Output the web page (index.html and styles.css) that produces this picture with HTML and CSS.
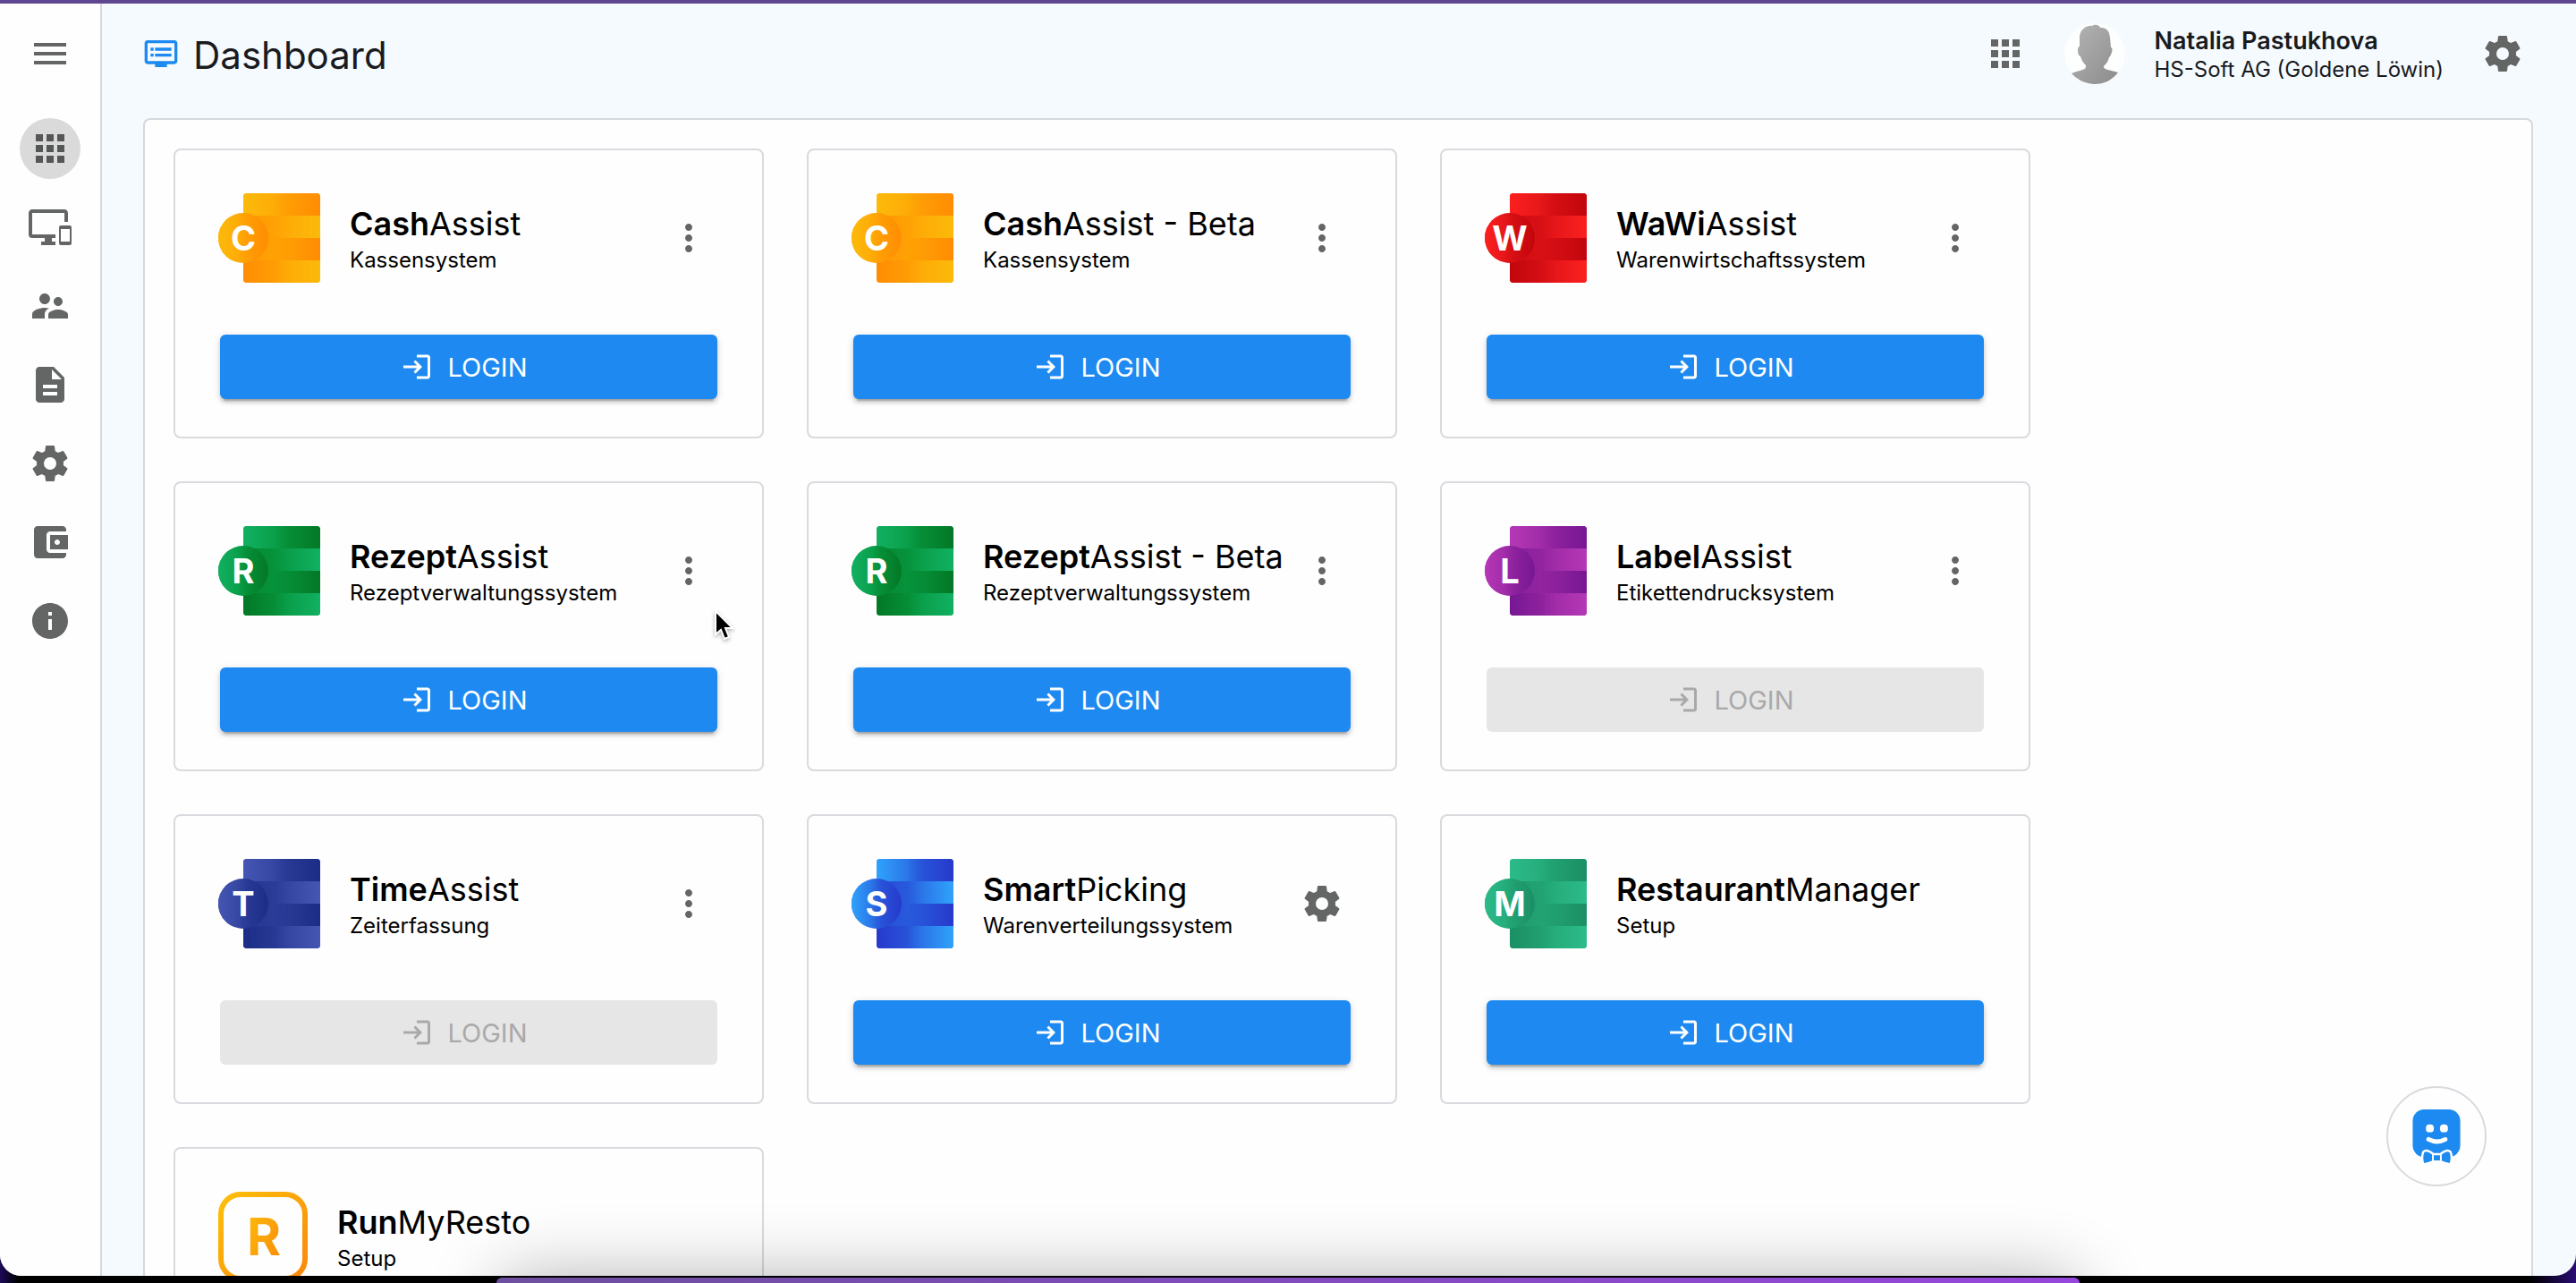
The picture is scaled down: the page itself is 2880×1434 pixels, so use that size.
FILE: index.html
```html
<!DOCTYPE html>
<html lang="de">
<head>
<meta charset="utf-8">
<title>Dashboard</title>
<link rel="stylesheet" href="styles.css">
</head>
<body>
<svg class="defs" aria-hidden="true">
  <defs>
    <linearGradient id="ramp-right"><stop offset="0" stop-color="#000"/><stop offset="1" stop-color="#fff"/></linearGradient>
    <linearGradient id="ramp-left"><stop offset="0" stop-color="#fff"/><stop offset="1" stop-color="#000"/></linearGradient>
    <linearGradient id="amber" x1="0" y1="0" x2="1" y2="1"><stop offset="0" stop-color="#fdbf0b"/><stop offset="1" stop-color="#f9880a"/></linearGradient>
    <linearGradient id="silver" x1="0" y1="0" x2="1" y2="1"><stop offset="0" stop-color="#b4b4b4"/><stop offset="1" stop-color="#8c8c8c"/></linearGradient>
    <mask id="fade-right" maskContentUnits="objectBoundingBox"><rect x=".4" width=".6" height="1" fill="url(#ramp-right)"/></mask>
    <mask id="fade-left" maskContentUnits="objectBoundingBox"><rect width=".6" height="1" fill="url(#ramp-left)"/></mask>
    <clipPath id="sheet"><rect x="28" width="86" height="100" rx="4"/></clipPath>
    <symbol id="logo" viewBox="0 0 114 100">
      <g clip-path="url(#sheet)">
        <rect class="mid" x="28" width="86" height="100"/>
        <rect class="light" x="28" width="86" height="25" mask="url(#fade-left)"/>
        <rect class="dark" x="28" width="86" height="25" mask="url(#fade-right)"/>
        <rect class="dark" x="28" y="25" width="86" height="50" opacity=".5" mask="url(#fade-left)"/>
        <rect class="light" x="28" y="25" width="86" height="25" mask="url(#fade-right)"/>
        <rect class="dark" x="28" y="50" width="86" height="25" mask="url(#fade-right)"/>
        <rect class="dark" x="28" y="75" width="86" height="25" mask="url(#fade-left)"/>
        <rect class="light" x="28" y="75" width="86" height="25" mask="url(#fade-right)"/>
      </g>
      <circle class="mid" cx="28" cy="50" r="28"/>
      <circle class="light" cx="28" cy="50" r="28" mask="url(#fade-left)"/>
      <circle class="dark" cx="28" cy="50" r="28" mask="url(#fade-right)"/>
    </symbol>
    <symbol id="i-menu" viewBox="0 0 24 24"><path d="M3 18h18v-2H3v2zm0-5h18v-2H3v2zm0-7v2h18V6H3z"/></symbol>
    <symbol id="i-apps" viewBox="0 0 24 24"><path d="M4 8h4V4H4v4zm6 12h4v-4h-4v4zm-6 0h4v-4H4v4zm0-6h4v-4H4v4zm6 0h4v-4h-4v4zm6-10v4h4V4h-4zm-6 4h4V4h-4v4zm6 6h4v-4h-4v4zm0 6h4v-4h-4v4z"/></symbol>
    <symbol id="i-devices" viewBox="0 0 24 24"><path d="M23 11H18A1 1 0 0 0 17 12V21A1 1 0 0 0 18 22H23A1 1 0 0 0 24 21V12A1 1 0 0 0 23 11M23 20H18V13H23V20M20 2H2C.89 2 0 2.89 0 4V16A2 2 0 0 0 2 18H9V20H7V22H15V20H13V18H15V16H2V4H20V9H22V4C22 2.89 21.1 2 20 2Z"/></symbol>
    <symbol id="i-users" viewBox="0 0 24 24"><path d="M16.5 12c1.38 0 2.49-1.12 2.49-2.5S17.88 7 16.5 7 14 8.12 14 9.5s1.12 2.5 2.5 2.5zM9 11c1.66 0 2.99-1.34 2.99-3S10.66 5 9 5 6 6.34 6 8s1.34 3 3 3zm7.5 3c-1.83 0-5.5.92-5.5 2.75V19h11v-2.25c0-1.83-3.67-2.75-5.5-2.75zM9 13c-2.33 0-7 1.17-7 3.5V19h7v-2.25c0-.85.33-2.34 2.37-3.47C10.5 13.1 9.66 13 9 13z"/></symbol>
    <symbol id="i-doc" viewBox="0 0 24 24"><path d="M14 2H6c-1.1 0-1.99.9-1.99 2L4 20c0 1.1.89 2 1.99 2H18c1.1 0 2-.9 2-2V8l-6-6zm2 16H8v-2h8v2zm0-4H8v-2h8v2zm-3-5V3.500L18.500 9H13z"/></symbol>
    <symbol id="i-cog" viewBox="0 0 24 24"><path d="M12,15.5A3.5,3.5 0 0,1 8.5,12A3.5,3.5 0 0,1 12,8.5A3.5,3.5 0 0,1 15.5,12A3.5,3.5 0 0,1 12,15.5M19.43,12.97C19.47,12.65 19.5,12.33 19.5,12C19.5,11.67 19.47,11.34 19.43,11L21.54,9.37C21.73,9.22 21.78,8.95 21.66,8.73L19.66,5.27C19.54,5.05 19.27,4.96 19.05,5.05L16.56,6.05C16.04,5.66 15.5,5.32 14.87,5.07L14.5,2.42C14.46,2.18 14.25,2 14,2H10C9.75,2 9.54,2.18 9.5,2.42L9.13,5.07C8.5,5.32 7.96,5.66 7.44,6.05L4.95,5.05C4.73,4.96 4.46,5.05 4.34,5.27L2.34,8.73C2.21,8.95 2.27,9.22 2.46,9.37L4.57,11C4.53,11.34 4.5,11.67 4.5,12C4.5,12.33 4.53,12.65 4.57,12.97L2.46,14.63C2.27,14.78 2.21,15.05 2.34,15.27L4.34,18.73C4.46,18.95 4.73,19.03 4.95,18.95L7.44,17.94C7.96,18.34 8.5,18.68 9.13,18.93L9.5,21.58C9.54,21.82 9.75,22 10,22H14C14.25,22 14.46,21.82 14.5,21.58L14.87,18.93C15.5,18.67 16.04,18.34 16.56,17.94L19.05,18.95C19.27,19.03 19.54,18.95 19.66,18.73L21.66,15.27C21.78,15.05 21.73,14.78 21.54,14.63L19.43,12.97Z"/></symbol>
    <symbol id="i-wallet" viewBox="0 0 24 24"><path d="M21 18v1c0 1.1-.9 2-2 2H5c-1.11 0-2-.9-2-2V5c0-1.1.89-2 2-2h14c1.1 0 2 .9 2 2v1h-9c-1.11 0-2 .9-2 2v8c0 1.1.89 2 2 2h9zm-9-2h10V8H12v8zm4-2.5c-.83 0-1.5-.67-1.5-1.5s.67-1.5 1.5-1.5 1.500.67 1.500 1.500-.67 1.500-1.500 1.500z"/></symbol>
    <symbol id="i-info" viewBox="0 0 24 24"><path d="M12 2C6.480 2 2 6.480 2 12s4.480 10 10 10 10-4.480 10-10S17.520 2 12 2zm1 15h-2v-6h2v6zm0-8h-2V7h2v2z"/></symbol>
    <symbol id="i-dvr" viewBox="0 0 24 24"><path d="M21 3H3c-1.1 0-2 .9-2 2v12c0 1.1.9 2 2 2h5v2h8v-2h5c1.1 0 1.99-.9 1.99-2L23 5c0-1.1-.9-2-2-2zm0 14H3V5h18v12zm-2-9H8v2h11V8zm0 4H8v2h11v-2zM7 8H5v2h2V8zm0 4H5v2h2v-2z"/></symbol>
    <symbol id="i-more" viewBox="0 0 24 24"><path d="M12 8c1.1 0 2-.9 2-2s-.9-2-2-2-2 .9-2 2 .9 2 2 2zm0 2c-1.1 0-2 .9-2 2s.9 2 2 2 2-.9 2-2-.9-2-2-2zm0 6c-1.1 0-2 .9-2 2s.9 2 2 2 2-.9 2-2-.9-2-2-2z"/></symbol>
    <symbol id="i-login" viewBox="0 0 24 24"><path d="M11 7 9.6 8.4l2.6 2.6H2v2h10.2l-2.6 2.6L11 17l5-5-5-5zm9 12h-8v2h8c1.1 0 2-.9 2-2V5c0-1.1-.9-2-2-2h-8v2h8v14z"/></symbol>
  </defs>
</svg>

<div class="window">
  <nav class="sidebar" aria-label="Navigation">
    <button class="round" aria-label="Menü"><svg class="icon"><use href="#i-menu"/></svg></button>
    <div class="links">
      <a class="round active" href="#apps" aria-label="Apps"><svg class="icon"><use href="#i-apps"/></svg></a>
      <a class="round" href="#devices" aria-label="Geräte"><svg class="icon"><use href="#i-devices"/></svg></a>
      <a class="round" href="#users" aria-label="Benutzer"><svg class="icon"><use href="#i-users"/></svg></a>
      <a class="round" href="#documents" aria-label="Dokumente"><svg class="icon"><use href="#i-doc"/></svg></a>
      <a class="round" href="#settings" aria-label="Einstellungen"><svg class="icon"><use href="#i-cog"/></svg></a>
      <a class="round" href="#wallet" aria-label="Zahlungen"><svg class="icon"><use href="#i-wallet"/></svg></a>
      <a class="round" href="#info" aria-label="Info"><svg class="icon"><use href="#i-info"/></svg></a>
    </div>
  </nav>

  <div class="page">
    <header class="topbar">
      <svg class="title-icon"><use href="#i-dvr"/></svg>
      <h1>Dashboard</h1>
      <button class="round apps" aria-label="Apps"><svg class="icon"><use href="#i-apps"/></svg></button>
      <svg class="avatar" viewBox="0 0 68 68" aria-hidden="true">
        <circle cx="34" cy="34" r="34" fill="#fdfefe"/>
        <path fill="url(#silver)" d="M17 14C19 5 26 2 31 3C35 0 40 3 40 5C45 5 50 6 51 16L52 27C54 27 54 31 52 35Q51 38 50 38C49 43 46 46 44 48C43 52 51 52 60 55C53 64 44 68 34 68C24 68 14 63 8 56C17 52 25 53 24 47C21 44 19 41 18 37Q15 36 15 30Q15 26 17 26Z"/>
      </svg>
      <div class="user"><strong>Natalia Pastukhova</strong><span>HS-Soft AG (Goldene Löwin)</span></div>
      <button class="round" aria-label="Einstellungen"><svg class="icon"><use href="#i-cog"/></svg></button>
    </header>

    <main class="panel">
      <article class="card cash">
        <div class="head"><svg class="logo" viewBox="0 0 114 100"><use href="#logo"/><text x="28" y="64">C</text></svg>
          <div class="text"><h2><b>Cash</b>Assist</h2><p>Kassensystem</p></div>
          <button class="more" aria-label="Mehr"><svg class="icon"><use href="#i-more"/></svg></button></div>
        <button class="login"><svg><use href="#i-login"/></svg>LOGIN</button>
      </article>
      <article class="card cash">
        <div class="head"><svg class="logo" viewBox="0 0 114 100"><use href="#logo"/><text x="28" y="64">C</text></svg>
          <div class="text"><h2><b>Cash</b>Assist - Beta</h2><p>Kassensystem</p></div>
          <button class="more" aria-label="Mehr"><svg class="icon"><use href="#i-more"/></svg></button></div>
        <button class="login"><svg><use href="#i-login"/></svg>LOGIN</button>
      </article>
      <article class="card wawi">
        <div class="head"><svg class="logo" viewBox="0 0 114 100"><use href="#logo"/><text x="28" y="64">W</text></svg>
          <div class="text"><h2><b>WaWi</b>Assist</h2><p>Warenwirtschaftssystem</p></div>
          <button class="more" aria-label="Mehr"><svg class="icon"><use href="#i-more"/></svg></button></div>
        <button class="login"><svg><use href="#i-login"/></svg>LOGIN</button>
      </article>
      <article class="card rezept">
        <div class="head"><svg class="logo" viewBox="0 0 114 100"><use href="#logo"/><text x="28" y="64">R</text></svg>
          <div class="text"><h2><b>Rezept</b>Assist</h2><p>Rezeptverwaltungssystem</p></div>
          <button class="more" aria-label="Mehr"><svg class="icon"><use href="#i-more"/></svg></button></div>
        <button class="login"><svg><use href="#i-login"/></svg>LOGIN</button>
      </article>
      <article class="card rezept">
        <div class="head"><svg class="logo" viewBox="0 0 114 100"><use href="#logo"/><text x="28" y="64">R</text></svg>
          <div class="text"><h2><b>Rezept</b>Assist - Beta</h2><p>Rezeptverwaltungssystem</p></div>
          <button class="more" aria-label="Mehr"><svg class="icon"><use href="#i-more"/></svg></button></div>
        <button class="login"><svg><use href="#i-login"/></svg>LOGIN</button>
      </article>
      <article class="card label">
        <div class="head"><svg class="logo" viewBox="0 0 114 100"><use href="#logo"/><text x="28" y="64">L</text></svg>
          <div class="text"><h2><b>Label</b>Assist</h2><p>Etikettendrucksystem</p></div>
          <button class="more" aria-label="Mehr"><svg class="icon"><use href="#i-more"/></svg></button></div>
        <button class="login" disabled><svg><use href="#i-login"/></svg>LOGIN</button>
      </article>
      <article class="card time">
        <div class="head"><svg class="logo" viewBox="0 0 114 100"><use href="#logo"/><text x="28" y="64">T</text></svg>
          <div class="text"><h2><b>Time</b>Assist</h2><p>Zeiterfassung</p></div>
          <button class="more" aria-label="Mehr"><svg class="icon"><use href="#i-more"/></svg></button></div>
        <button class="login" disabled><svg><use href="#i-login"/></svg>LOGIN</button>
      </article>
      <article class="card smart">
        <div class="head"><svg class="logo" viewBox="0 0 114 100"><use href="#logo"/><text x="28" y="64">S</text></svg>
          <div class="text"><h2><b>Smart</b>Picking</h2><p>Warenverteilungssystem</p></div>
          <button class="more" aria-label="Einstellungen"><svg class="icon"><use href="#i-cog"/></svg></button></div>
        <button class="login"><svg><use href="#i-login"/></svg>LOGIN</button>
      </article>
      <article class="card manager">
        <div class="head"><svg class="logo" viewBox="0 0 114 100"><use href="#logo"/><text x="28" y="64">M</text></svg>
          <div class="text"><h2><b>Restaurant</b>Manager</h2><p>Setup</p></div></div>
        <button class="login"><svg><use href="#i-login"/></svg>LOGIN</button>
      </article>
      <article class="card">
        <div class="head"><svg class="logo resto" viewBox="0 0 100 100"><rect x="3" y="3" width="94" height="94" rx="22"/><text x="51" y="71">R</text></svg>
          <div class="text"><h2><b>Run</b>MyResto</h2><p>Setup</p></div></div>
      </article>
    </main>
  </div>

  <div class="dock-shadow"></div>
  <button class="assistant" aria-label="Assistent">
    <svg viewBox="0 0 54 62">
      <rect width="54" height="54" rx="13" fill="#1c8af0"/>
      <rect x="15" y="17" width="9" height="9" rx="4" fill="#fff"/><rect x="31" y="17" width="9" height="9" rx="4" fill="#fff"/>
      <path d="M18 34Q27 39 37 34" fill="none" stroke="#fff" stroke-width="5" stroke-linecap="round"/>
      <path d="M13 49Q16 46 23 52H32Q39 46 42 49Q44 55 42 61Q37 60 32 58H23Q18 60 13 61Q11 55 13 49Z" fill="#1c8af0" stroke="#fff" stroke-width="5" stroke-linejoin="round"/>
      <path d="M13 49Q16 46 23 52H32Q39 46 42 49Q44 55 42 61Q37 60 32 58H23Q18 60 13 61Q11 55 13 49Z" fill="#1c8af0"/>
      <path d="M23 50V60M32 50V60" stroke="#fff" stroke-width="2"/>
    </svg>
  </button>
  <svg class="cursor" viewBox="0 0 24 36"><path d="M2 2V28L8 23L12 33L17 31L13 21H21Z" fill="#000" stroke="#fff" stroke-width="2"/></svg>
</div>
<div class="dock"></div>
</body>
</html>
```
FILE: styles.css
```css
* { box-sizing: border-box; }

body {
  position: relative;
  display: flex;
  flex-direction: column;
  height: 100vh;
  margin: 0;
  padding: 4px 0 8px;
  overflow: hidden;
  background: linear-gradient(#5e4690 4px, transparent 4px), linear-gradient(90deg, #1d0b58, #000 20px calc(100% - 50px), #2a0c74);
  color: #191b1f;
  font-family: Inter, "Open Sans", sans-serif;
}

h1, h2, p { margin: 0; font-weight: 400; }
button { border: 0; padding: 0; background: none; font: inherit; color: inherit; }
.defs { position: absolute; width: 0; height: 0; }

.window {
  position: relative;
  display: flex;
  flex: 1;
  min-height: 0;
  overflow: hidden;
  border-radius: 0 0 24px 24px;
  background: #f5fafe;
}

.icon { width: 48px; height: 48px; fill: #646665; }
.round {
  display: flex;
  flex: none;
  align-items: center;
  justify-content: center;
  width: 68px;
  height: 68px;
  border-radius: 50%;
}
.active { background: #dadada; }
.active .icon { fill: #555756; }

.sidebar {
  display: flex;
  flex: none;
  flex-direction: column;
  align-items: center;
  gap: 38px;
  width: 114px;
  padding-top: 22px;
  border-right: 2px solid #d5d9de;
  background: #fefefe;
}
.links { display: flex; flex-direction: column; gap: 20px; }

.page { display: flex; flex: 1; flex-direction: column; min-width: 0; padding: 0 48px 0 46px; }

.topbar { display: flex; flex: none; align-items: center; height: 112px; margin-bottom: 16px; }
.title-icon { width: 40px; height: 40px; margin-right: 16px; fill: #1c8af0; }
h1 { flex: 1; padding-top: 4px; font-size: 42px; line-height: 56px; }
.apps { margin-right: 32px; }
.avatar { width: 68px; height: 68px; margin-right: 32px; }
.user { display: flex; flex-direction: column; margin-right: 32px; padding-top: 4px; font-size: 24px; line-height: 32px; }
.user strong { font-size: 27px; font-weight: 600; }

.panel {
  display: grid;
  flex: 1;
  grid-template-columns: repeat(auto-fill, 660px);
  align-content: start;
  gap: 48px;
  min-height: 0;
  padding: 32px;
  overflow: hidden;
  border: 2px solid #d5d9de;
  border-bottom: 0;
  border-radius: 8px 8px 0 0;
  background: #fefefe;
}

.card {
  display: flex;
  flex-direction: column;
  gap: 58px;
  min-height: 324px;
  padding: 48px 48px 42px;
  border: 2px solid #d9dade;
  border-radius: 8px;
  color: #000;
}
.head { display: flex; align-items: center; gap: 32px; height: 100px; }
.text { flex: 1; padding: 6px 0 0 1px; white-space: nowrap; }
h2 { font-size: 36px; line-height: 44px; }
h2 b { font-weight: 600; }
.text p { font-size: 24px; line-height: 38px; }
.more { display: flex; align-items: center; justify-content: center; width: 64px; height: 64px; margin: 0 2px 0 -32px; }

.login {
  display: flex;
  align-items: center;
  justify-content: center;
  gap: 16px;
  height: 72px;
  margin: 0 2px;
  padding-right: 10px;
  border-radius: 6px;
  background: #1e8af1;
  box-shadow: 0 6px 2px -4px rgba(0, 0, 0, .2), 0 4px 4px rgba(0, 0, 0, .14), 0 2px 10px rgba(0, 0, 0, .12);
  color: #fff;
  font-size: 29px;
}
.login svg { width: 36px; height: 36px; fill: currentColor; }
.login:disabled { background: #e6e6e6; box-shadow: none; color: #a9a9a9; }

.logo { flex: none; width: 114px; height: 100px; }
.logo text { fill: #fff; font-size: 38px; font-weight: 700; text-anchor: middle; }
.light { fill: var(--light); }
.mid { fill: var(--mid); }
.dark { fill: var(--dark); }
.cash { --light: #fcba0b; --mid: #ffa506; --dark: #ff8c03; }
.wawi { --light: #fb201f; --mid: #dc1318; --dark: #c2060c; }
.rezept { --light: #12b063; --mid: #07983f; --dark: #047826; }
.label { --light: #b538b6; --mid: #9827a2; --dark: #771793; }
.time { --light: #4557b2; --mid: #2d3f9b; --dark: #1c2d86; }
.smart { --light: #30a3fb; --mid: #2960df; --dark: #2739cb; }
.manager { --light: #2cbb89; --mid: #24a777; --dark: #1c8f65; }
.resto { width: 100px; }
.resto rect { fill: none; stroke: url(#amber); stroke-width: 6; }
.resto text { fill: url(#amber); font-size: 58px; }

.assistant {
  position: absolute;
  right: 100px;
  bottom: 100px;
  display: flex;
  align-items: center;
  justify-content: center;
  width: 112px;
  height: 112px;
  border: 2px solid #d9dade;
  border-radius: 50%;
  background: #fefefe;
}
.assistant svg { width: 54px; height: 62px; padding-top: 1px; }

.cursor { position: absolute; top: 677px; left: 798px; width: 24px; height: 36px; filter: drop-shadow(0 2px 2px rgba(0, 0, 0, .3)); }

.dock-shadow {
  position: absolute;
  right: 560px;
  bottom: -80px;
  left: 560px;
  height: 70px;
  border-radius: 30px;
  box-shadow: 0 0 80px 6px rgba(0, 0, 0, .32);
}
.dock {
  position: absolute;
  right: 555px;
  bottom: 0;
  left: 555px;
  height: 6px;
  border-radius: 24px 24px 0 0;
  background: linear-gradient(90deg, #6d4f9f, #9747dc);
}
```
